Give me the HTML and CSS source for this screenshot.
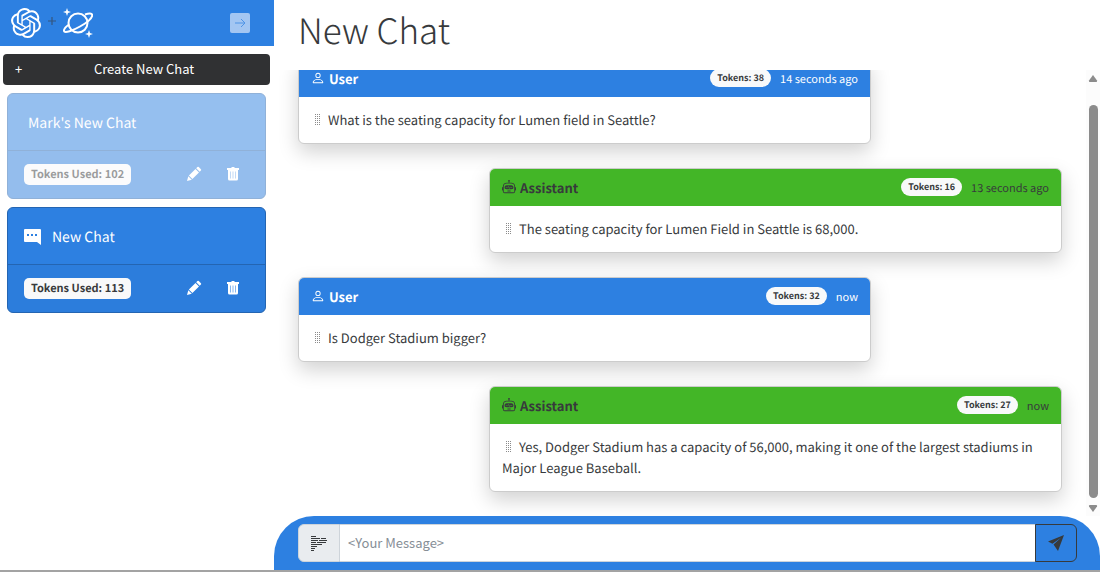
FILE: index.html
```html
<!DOCTYPE html>
<html lang="en">
<head>
<meta charset="utf-8">
<title>New Chat</title>
<link rel="stylesheet" href="styles.css">
</head>
<body>
<svg class="sprite" aria-hidden="true">
  <symbol id="pencil" viewBox="0 0 16 16"><path d="M1 15l1.300-4.800 3.500 3.500zM2.900 9.600l6.600-6.600 3.500 3.500-6.600 6.600zM10.200 2.300l1.200-1.200a1 1 0 0 1 1.400 0l2.100 2.100a1 1 0 0 1 0 1.400l-1.200 1.200z"/></symbol>
  <symbol id="trash" viewBox="0 0 16 16"><path d="M2 2h4l1-1h2l1 1h4v2H2zM3 4h10v9a1.500 1.500 0 0 1-1.500 1.500h-7A1.500 1.500 0 0 1 3 13z"/><path class="trash-lines" d="M5.500 5.500v7M8 5.500v7M10.500 5.500v7"/></symbol>
  <symbol id="person" viewBox="0 0 16 16"><path d="M8 8a3 3 0 1 0 0-6 3 3 0 0 0 0 6Zm2-3a2 2 0 1 1-4 0 2 2 0 0 1 4 0Zm4 8c0 1-1 1-1 1H3s-1 0-1-1 1-4 6-4 6 3 6 4Zm-1-.004c-.001-.246-.154-.986-.832-1.664C11.516 10.680 10.289 10 8 10c-2.290 0-3.516.680-4.168 1.332-.678.678-.830 1.418-.832 1.664h10Z"/></symbol>
  <symbol id="robot" viewBox="0 0 16 16"><path d="M6 12.500a.5.5 0 0 1 .5-.5h3a.5.5 0 0 1 0 1h-3a.5.5 0 0 1-.5-.5ZM3 8.062C3 6.760 4.235 5.765 5.530 5.886a26.580 26.580 0 0 0 4.940 0C11.765 5.765 13 6.760 13 8.062v1.157a.933.933 0 0 1-.765.935c-.845.147-2.340.346-4.235.346-1.895 0-3.390-.2-4.235-.346A.933.933 0 0 1 3 9.219V8.062Zm4.542-.827a.25.25 0 0 0-.217.068l-.920.900a24.767 24.767 0 0 1-1.871-.183.25.25 0 0 0-.068.495c.550.076 1.232.149 2.020.193a.25.25 0 0 0 .189-.071l.754-.736.847 1.710a.25.25 0 0 0 .404.062l.932-.970a25.286 25.286 0 0 0 1.922-.188.25.25 0 0 0-.068-.495c-.538.074-1.207.145-1.980.189a.25.25 0 0 0-.166.076l-.754.785-.842-1.700a.25.25 0 0 0-.182-.135Z"/><path d="M8.500 1.866a1 1 0 1 0-1 0V3h-2A4.500 4.500 0 0 0 1 7.500V8a1 1 0 0 0-1 1v2a1 1 0 0 0 1 1v1a2 2 0 0 0 2 2h10a2 2 0 0 0 2-2v-1a1 1 0 0 0 1-1V9a1 1 0 0 0-1-1v-.5A4.500 4.500 0 0 0 10.500 3h-2V1.866ZM14 7.500V13a1 1 0 0 1-1 1H3a1 1 0 0 1-1-1V7.500A3.500 3.500 0 0 1 5.500 4h5A3.500 3.500 0 0 1 14 7.500Z"/></symbol>
  <symbol id="grip" viewBox="0 0 5 12"><path d="M0 0h1v1H0zM2 0h1v1H2zM4 0h1v1H4zM0 2h1v1H0zM2 2h1v1H2zM4 2h1v1H4zM0 4h1v1H0zM2 4h1v1H2zM4 4h1v1H4zM0 6h1v1H0zM2 6h1v1H2zM4 6h1v1H4zM0 8h1v1H0zM2 8h1v1H2zM4 8h1v1H4zM0 10h1v1H0zM2 10h1v1H2zM4 10h1v1H4z"/></symbol>
</svg>
<div class="app">
  <aside class="sidebar">
    <header class="brand">
      <svg class="logo" viewBox="0 0 24 24" aria-hidden="true"><path d="M22.282 9.821a5.985 5.985 0 0 0-.516-4.910 6.046 6.046 0 0 0-6.510-2.900A6.065 6.065 0 0 0 4.981 4.182a5.985 5.985 0 0 0-3.998 2.900 6.046 6.046 0 0 0 .743 7.097 5.980 5.980 0 0 0 .510 4.911 6.051 6.051 0 0 0 6.515 2.900A5.985 5.985 0 0 0 13.260 24a6.056 6.056 0 0 0 5.772-4.206 5.990 5.990 0 0 0 3.997-2.900 6.056 6.056 0 0 0-.747-7.073zM13.260 22.430a4.476 4.476 0 0 1-2.876-1.040l.141-.081 4.779-2.758a.795.795 0 0 0 .392-.681v-6.737l2.020 1.168a.071.071 0 0 1 .038.052v5.583a4.504 4.504 0 0 1-4.494 4.494zM3.600 18.304a4.470 4.470 0 0 1-.535-3.014l.142.085 4.783 2.759a.771.771 0 0 0 .780 0l5.843-3.369v2.332a.080.080 0 0 1-.033.062L9.740 19.950a4.500 4.500 0 0 1-6.140-1.646zM2.340 7.896a4.485 4.485 0 0 1 2.366-1.973V11.600a.766.766 0 0 0 .388.676l5.815 3.355-2.020 1.168a.076.076 0 0 1-.071 0l-4.830-2.786A4.504 4.504 0 0 1 2.340 7.872zm16.597 3.855l-5.833-3.387L15.119 7.200a.076.076 0 0 1 .071 0l4.830 2.791a4.494 4.494 0 0 1-.676 8.105v-5.678a.790.790 0 0 0-.407-.667zm2.010-3.023l-.141-.085-4.774-2.782a.776.776 0 0 0-.785 0L9.409 9.230V6.897a.066.066 0 0 1 .028-.061l4.830-2.787a4.500 4.500 0 0 1 6.680 4.660zm-12.640 4.135l-2.020-1.164a.080.080 0 0 1-.038-.057V6.075a4.500 4.500 0 0 1 7.375-3.453l-.142.080L8.704 5.460a.795.795 0 0 0-.393.681zm1.097-2.365l2.602-1.500 2.607 1.500v2.999l-2.597 1.500-2.607-1.500z"/></svg>
      <svg class="plus" viewBox="0 0 8 8" aria-hidden="true"><path d="M3.400 0h1.200v3.400H8v1.200H4.600V8H3.400V4.600H0V3.400h3.400z"/></svg>
      <svg class="logo" viewBox="0 0 30 30" aria-hidden="true"><g class="line"><circle cx="15" cy="15" r="9.500"/><path d="M22 6.500c4-1.500 7-1.500 7.200.3C29.500 10 24 14.500 17 18.500S1.500 25.500 1 23c-.3-1.500 1.500-4 5-6.500"/></g><path d="M4 0l1 3 3 1-3 1-1 3-1-3-3-1 3-1zM26 22l1 3 3 1-3 1-1 3-1-3-3-1 3-1z"/></svg>
      <button class="collapse" aria-label="Collapse"><svg viewBox="0 0 14 14"><path d="M2 7h10M8 3l4 4-4 4"/></svg></button>
    </header>
    <button class="create"><span>+</span><span class="create-label">Create New Chat</span></button>
    <section class="session inactive">
      <div class="session-title"><span>Mark's New Chat</span></div>
      <div class="session-footer"><span class="used">Tokens Used: 102</span>
        <button class="tool" aria-label="Rename"><svg><use href="#pencil"/></svg></button>
        <button class="tool" aria-label="Delete"><svg><use href="#trash"/></svg></button></div>
    </section>
    <section class="session">
      <div class="session-title"><svg class="bubble" viewBox="0 0 17 16"><path d="M1 0h15a1 1 0 0 1 1 1v15l-4-3H1a1 1 0 0 1-1-1V1a1 1 0 0 1 1-1z"/><path class="dots" d="M3 5h2v2H3zM7 5h2v2H7zM11 5h2v2h-2z"/></svg><span>New Chat</span></div>
      <div class="session-footer"><span class="used">Tokens Used: 113</span>
        <button class="tool" aria-label="Rename"><svg><use href="#pencil"/></svg></button>
        <button class="tool" aria-label="Delete"><svg><use href="#trash"/></svg></button></div>
    </section>
  </aside>
  <main class="chat">
    <h1>New Chat</h1>
    <div class="scroller">
      <div class="messages">
        <article class="message user">
          <header><svg class="who"><use href="#person"/></svg><strong>User</strong><span class="tokens">Tokens: 38</span><time>14 seconds ago</time></header>
          <p><svg class="grip"><use href="#grip"/></svg>What is the seating capacity for Lumen field in Seattle?</p>
        </article>
        <article class="message assistant">
          <header><svg class="who"><use href="#robot"/></svg><strong>Assistant</strong><span class="tokens">Tokens: 16</span><time>13 seconds ago</time></header>
          <p><svg class="grip"><use href="#grip"/></svg>The seating capacity for Lumen Field in Seattle is 68,000.</p>
        </article>
        <article class="message user">
          <header><svg class="who"><use href="#person"/></svg><strong>User</strong><span class="tokens">Tokens: 32</span><time>now</time></header>
          <p><svg class="grip"><use href="#grip"/></svg>Is Dodger Stadium bigger?</p>
        </article>
        <article class="message assistant">
          <header><svg class="who"><use href="#robot"/></svg><strong>Assistant</strong><span class="tokens">Tokens: 27</span><time>now</time></header>
          <p><svg class="grip"><use href="#grip"/></svg>Yes, Dodger Stadium has a capacity of 56,000, making it one of the largest stadiums in Major League Baseball.</p>
        </article>
      </div>
      <div class="scrollbar" aria-hidden="true"><svg viewBox="0 0 10 7"><path d="M5 0l4 5.500q.5 1.500-1 1.500H2Q.5 7 1 5.500z"/></svg><div class="thumb"></div><svg viewBox="0 0 10 7"><path d="M5 7L1 1.500Q.5 0 2 0h6q1.500 0 1 1.500z"/></svg></div>
    </div>
    <form class="composer">
      <label class="prompt-icon" for="message" aria-label="Your message"><svg viewBox="0 0 16 15"><path d="M0 0h5v1H0zM0 2h9v1H0zM10 2h5v1h-5zM0 4h7v1H0zM8 4h8v1H8zM0 6h5v1H0zM6 6h9v1H6zM0 8h11v1H0zM0 10h6v1H0zM0 12h4v1H0zM0 14h3v1H0z"/></svg></label>
      <input id="message" type="text" placeholder="&lt;Your Message&gt;">
      <button class="send" type="button" aria-label="Send"><svg viewBox="0 0 16 16"><path d="M16 0L0 6.500l4.500 2.300L14 2zM16 0L5.500 9.500 10 16z"/></svg></button>
    </form>
  </main>
</div>
</body>
</html>
```
FILE: styles.css
```css
* { box-sizing: border-box; }
body {
  margin: 0;
  color: #373a3c;
  background: #fff;
  font: 13px/21px "Noto Sans CJK SC", "Open Sans", sans-serif;
  text-rendering: geometricPrecision;
}
button, input { font: inherit; color: inherit; }
button { cursor: pointer; }
svg { fill: currentColor; flex: none; }
.sprite { display: none; }
.app {
  display: grid;
  grid-template-columns: minmax(0, 274fr) minmax(0, 826fr);
  grid-template-rows: minmax(0, 1fr);
  height: 100vh;
  border-bottom: 2px solid #a3a3a3;
}
.sidebar { display: flex; flex-direction: column; }
.brand {
  display: flex;
  align-items: center;
  gap: 7px;
  height: 46px;
  padding: 0 24px 0 11px;
  background: #2d80e1;
}
.logo { width: 30px; height: 30px; color: #fff; }
.line { fill: none; stroke: currentColor; stroke-width: 2; }
.plus { width: 8px; height: 8px; margin-bottom: 4px; color: #34557f; }
.collapse {
  display: flex;
  align-items: center;
  justify-content: center;
  width: 20px;
  height: 20px;
  margin-left: auto;
  padding: 0;
  border: 0;
  border-radius: 2px;
  color: #4f94e6;
  background: #a3c6f2;
}
.collapse svg { width: 14px; height: 14px; fill: none; stroke: currentColor; }
.create {
  display: flex;
  margin: 8px 4px 8px 3px;
  padding: 4px 4px 6px 12px;
  border: 0;
  border-radius: 4px;
  color: #fff;
  background: #303133;
}
.create-label { flex: 1; }
.session {
  margin: 0 8px 8px 7px;
  border: 1px solid #2465b2;
  border-radius: 6px;
  color: #fff;
  background: #2d80e1;
}
.inactive { opacity: .5; }
.session-title {
  display: flex;
  align-items: center;
  gap: 11px;
  height: 56px;
  padding: 2px 16px 0;
  font-size: 14px;
}
.inactive .session-title { padding-left: 20px; }
.bubble { width: 17px; height: 16px; }
.dots { fill: #2d80e1; }
.session-footer {
  display: flex;
  align-items: center;
  gap: 23px;
  height: 48px;
  padding: 0 24px 0 16px;
  border-top: 1px solid #2465b2;
  background: rgba(0, 0, 0, .02);
}
.used {
  margin-right: auto;
  padding: 0 7px;
  border-radius: 5px;
  color: #373a3c;
  background: #f8f9fa;
  font-size: 11px;
  font-weight: 700;
}
.tool { display: flex; padding: 0 0 2px; border: 0; background: none; }
.tool svg { width: 16px; height: 16px; }
.trash-lines { stroke: #86b6ee; }
.chat { display: flex; flex-direction: column; min-width: 0; }
h1 {
  margin: 0;
  padding: 0 24px;
  height: 70px;
  font-size: 35px;
  line-height: 60px;
  font-weight: 300;
}
.scroller { display: flex; flex: 1; min-height: 0; }
.messages {
  display: flex;
  flex: 1;
  flex-direction: column;
  justify-content: flex-end;
  gap: 24px;
  padding: 0 24px 24px;
  overflow: hidden;
}
.message {
  width: 75%;
  flex: none;
  border: 1px solid #ccc;
  border-radius: 6px;
  background: #fff;
  box-shadow: 0 8px 20px rgba(0, 0, 0, .18);
  overflow: hidden;
}
.assistant { align-self: flex-end; }
.message header {
  display: flex;
  align-items: center;
  height: 37px;
  padding: 0 12px 1px;
}
.user header { color: #fff; background: #2d80e1; }
.assistant header { background: #43b627; }
.who { width: 14px; height: 14px; margin-right: 4px; }
.tokens {
  margin: 0 9px 0 auto;
  padding: 0 7px;
  border-radius: 9px;
  color: #373a3c;
  background: #f8f9fa;
  font-size: 9px;
  line-height: 18px;
  font-weight: 700;
}
time { padding-top: 2px; font-size: 11px; }
.message p { margin: 0; padding: 12px 12px 13px; }
.grip { width: 5px; height: 12px; margin: 0 8px 0 4px; vertical-align: -1px; color: #8b8b8b; }
.scrollbar {
  display: flex;
  flex-direction: column;
  align-items: center;
  width: 14px;
  padding: 5px 0 4px;
  color: #8b8b8b;
  background: #fcfcfc;
}
.scrollbar svg { width: 10px; height: 7px; }
.thumb { flex: 1; width: 9px; margin: 23px 0 7px; border-radius: 5px; background: #8b8b8b; }
.composer {
  display: flex;
  height: 54px;
  padding: 8px 23px 8px 24px;
  border-radius: 40px 40px 0 0;
  background: #2d80e1;
}
.prompt-icon {
  display: flex;
  align-items: center;
  justify-content: center;
  width: 42px;
  border: 1px solid #ced4da;
  border-radius: 6px 0 0 6px;
  background: #e9ecef;
}
.prompt-icon svg { width: 16px; height: 15px; }
.composer input {
  flex: 1;
  min-width: 0;
  padding: 0 8px 2px;
  border: solid #ced4da;
  border-width: 1px 0;
  background: #fff;
}
.composer input::placeholder { color: #868e96; opacity: 1; }
.send {
  display: flex;
  align-items: center;
  justify-content: center;
  width: 42px;
  border: 1px solid #373a3c;
  border-radius: 0 6px 6px 0;
  background: #2d80e1;
}
.send svg { width: 16px; height: 16px; }
```
